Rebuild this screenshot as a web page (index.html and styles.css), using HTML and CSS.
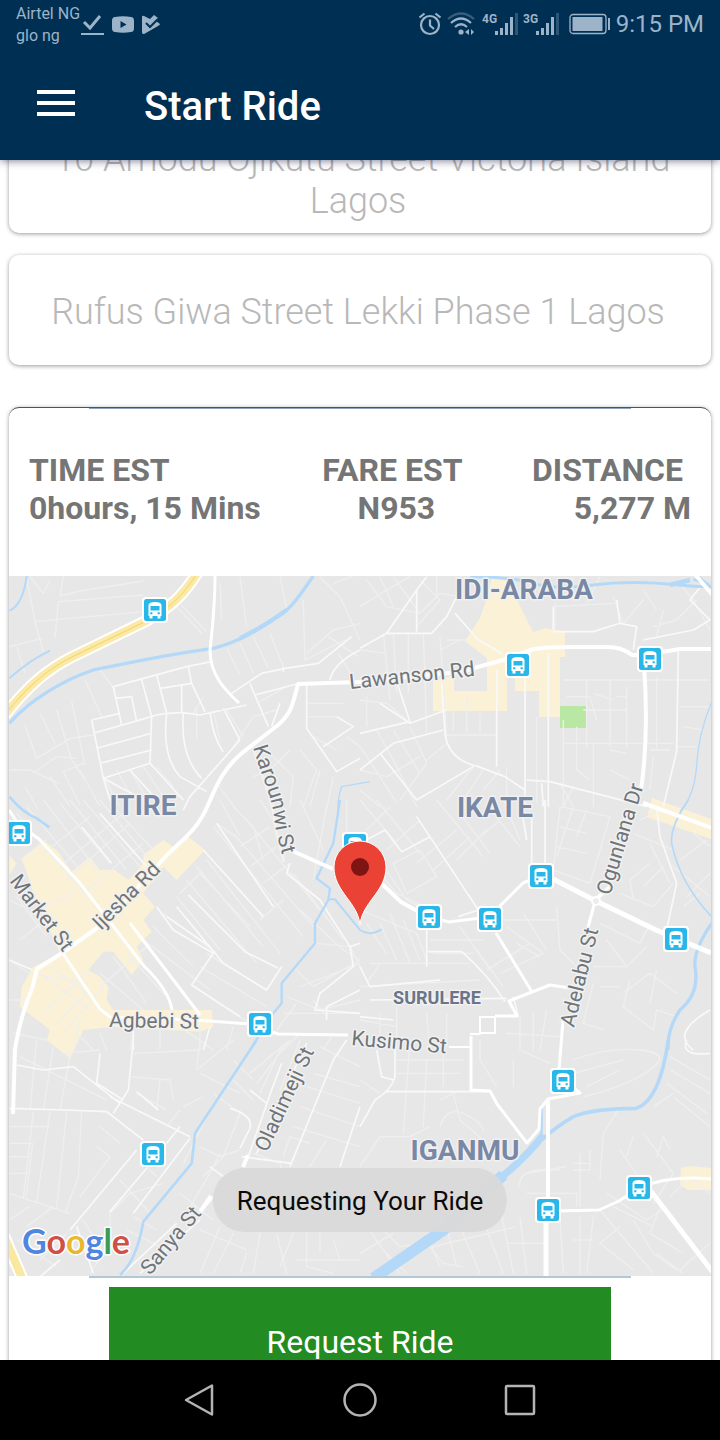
FILE: index.html
```html
<!DOCTYPE html>
<html lang="en">
<head>
<meta charset="utf-8">
<meta name="viewport" content="width=device-width, initial-scale=1">
<title>Start Ride</title>
<link rel="stylesheet" href="styles.css">
</head>
<body>
<header class="top">
  <div class="status">
    <div class="carriers"><span>Airtel NG</span><span>glo ng</span></div>
    <div class="notes">
      <svg class="ico" width="24" height="24" viewBox="0 0 24 24"><path d="M4 10l6 6L20 4" fill="none" stroke="currentColor" stroke-width="3"/><path d="M1 22h23" stroke="currentColor" stroke-width="2"/></svg>
      <svg class="ico" width="22" height="24" viewBox="0 0 22 24"><path fill="currentColor" fill-rule="evenodd" d="M3 5Q11 3.500 19 5Q22 5 22 9V16Q22 20 19 20Q11 21.500 3 20Q0 20 0 16V9Q0 5 3 5ZM8.500 9v7l6-3.500z"/></svg>
      <svg class="ico" width="18" height="24" viewBox="0 0 18 24"><path fill="currentColor" d="M0 5Q0 3 2 4L8 7 12 3 16 6 14 9 18 12Q18 13 16 14L3 21.500Q0 23 0 20Z"/><path d="M4 11l4 4 8-8" fill="none" stroke="#002f54" stroke-width="2"/></svg>
    </div>
    <div class="system">
      <svg class="ico" width="24" height="24" viewBox="0 0 24 24"><g fill="none" stroke="currentColor" stroke-width="2.200"><circle cx="12" cy="13" r="9"/><path d="M12 7.500v6l4 3.500M1.500 5.500l5-4M22.500 5.500l-5-4"/></g></svg>
      <svg class="ico wifi" width="28" height="24" viewBox="0 0 28 24"><g fill="none" stroke="currentColor" stroke-width="2.200"><path d="M1 7Q14-4 27 7" opacity=".35"/><path d="M4 11Q14 2 24 11M8 15Q14 9.500 20 15"/></g><circle cx="14" cy="20" r="2.600" fill="currentColor"/><path fill="currentColor" d="M18 20l4-3v6zM27 20l-3-3v6z"/></svg>
      <svg class="ico" width="36" height="24" viewBox="0 0 36 24"><text x="0" y="11" class="net">4G</text><g fill="currentColor"><path d="M13 19h3v4h-3zM18 16h3v7h-3zM23 11h3v12h-3zM28 5h3v18h-3z"/><path opacity=".3" d="M33 1h3v22h-3z"/></g></svg>
      <svg class="ico" width="36" height="24" viewBox="0 0 36 24"><text x="0" y="11" class="net">3G</text><g fill="currentColor"><path d="M13 19h3v4h-3zM18 16h3v7h-3zM23 11h3v12h-3zM28 5h3v18h-3z"/><path opacity=".3" d="M33 1h3v22h-3z"/></g></svg>
      <svg class="ico battery" width="42" height="24" viewBox="0 0 42 24"><rect x="1" y="2.500" width="36" height="19" rx="3" fill="none" stroke="currentColor" stroke-width="1.300"/><path fill="currentColor" d="M3.500 5h30v14h-30zM39 6h2v12h-2z"/></svg>
      <span class="clock">9:15 PM</span>
    </div>
  </div>
  <div class="appbar">
    <button class="menu" type="button" aria-label="Open menu"><span></span><span></span><span></span></button>
    <h1>Start Ride</h1>
  </div>
</header>

<main class="screen">
  <div class="scrolled">
    <p class="address">&nbsp;10 Amodu Ojikutu Street Victoria Island Lagos</p>
    <p class="address">Rufus Giwa Street Lekki Phase 1 Lagos</p>
    <section class="ride">
      <dl class="stats">
        <div><dt>TIME EST</dt><dd>0hours, 15 Mins</dd></div>
        <div class="mid"><dt>FARE EST&nbsp;</dt><dd>N953</dd></div>
        <div class="end"><dt>DISTANCE&nbsp;</dt><dd>5,277 M</dd></div>
      </dl>
      <div class="map">
        <svg class="canvas" viewBox="9 576 702 700" preserveAspectRatio="xMidYMid slice" role="img" aria-label="Map of Surulere">
          <defs>
            <g id="bus">
              <rect x="-13" y="-13" width="26" height="26" rx="4" fill="#fff"/>
              <rect x="-11" y="-11" width="22" height="22" rx="2.500" fill="#29b6e8"/>
              <path fill="#fff" fill-rule="evenodd" d="M-6.500-5Q-6-8 0-8Q6-8 6.500-5V6H5.500V8.500H2.500V6H-2.500V8.500H-5.500V6H-6.500ZM-4.500-4V.5H4.500V-4ZM-4.800 2.300v2h2.200v-2zM2.600 2.300v2h2.200v-2z"/>
            </g>
          </defs>
          <rect x="9" y="576" width="702" height="700" fill="#e7e7e7"/>

          <!-- built-up areas and park -->
          <g fill="#faf1d6">
            <path d="M487 598L492 576H505L533 632 545 628 565 632V657H560V717H539V691H515V672H507V711H433V680L454 676V691H487V658L465 641 480 618Z"/>
            <path d="M652 798l59 21v20l-64-22zM681 1168l8-2 22 2v22h-23l-8-5z"/>
            <path transform="translate(0 800) scale(.3333)" d="M65 180L130 120 175 155 215 215 270 170 300 210H345L385 240 430 190V165L490 120 520 140 565 110 615 150 530 240 490 200 430 280 465 320 430 360 455 395 410 440 430 480 395 525 340 455H310L265 510 300 530 325 560 320 600 340 630H635L640 680 600 695 340 680 250 690 210 775 140 720 150 690 60 620 65 560 100 500 180 460 130 350 100 280 80 215ZM28 165L50 190 28 225Z"/>
          </g>
          <path fill="#b9e8a4" d="M560 706h27v22h-27z"/>

          <!-- minor streets -->
          <g class="lane">
            <g transform="translate(0 570) scale(.3333)">
              <path d="M80 25L105 155 130 245M105 155L430 125M175 95L165 205M175 95L430 75M90 20l40 50 20-40M190 18l-10 60 60-15 190-30M28 230l100-25M50 230l25 80M75 465l35 100 100-60 70-10M120 430l45 90M170 420l45 150 40 60M215 395l40 190M255 330l50 110M300 300l45 60M28 600h60l90 40M100 610l70-50 60 5M190 605l60-25M190 605l50 100M240 600l60 110M150 620l60 90M75 650l40 70M530 110l75 80M545 105l75 80M660 40l5 110M720 20l20 150M840 18l20 100M910 90l5 180 120-60M680 235l40 80M720 220l40 90M760 200l45 95M810 190l40 100M920 250l80-70 80-20M960 20l60 60 60 130M1000 40l80-30M920 400h110M920 440h90M870 540l-60 60-50 20M900 540l50 60-40 110M940 500l70 40M820 560l60 60-10 90M1040 500l40 30M960 600l-30 110M1000 620l-20 100M830 420l-70 20-60 90M860 350l-90 50M1015 250l50 80M985 200l90 60"/>
              <path d="M590 420v90M640 420l20 90M680 420l50 80M610 380l-30 50M310 620l50 90M350 600l50 90M390 600l60 100M430 590l60 90M470 590l50 60M650 640l60 80"/>
            </g>
            <g transform="translate(360 570) scale(.3333)">
              <path d="M20 30l60 80 100 20M60 20l40 90M100 20l80 110 60-60 60 10M0 110l80-50 70-40M180 30l60 60-70 80M230 20v60M240 200l20 300M260 210h60M240 240l60-30M145 190v180M190 190l10 300M70 190l20 200M0 240l80 10M100 190l10 180M0 390l80 10 60 50M20 380v90M250 495h160M280 380l0 100M320 380v110M360 430v60M585 100v80M580 110l180-10M760 80l30 80 60-70M720 20l-40 80M640 20l-20 60M850 60l40 60M880 170l70-20 60-60M890 200l20-80M610 330h440M680 330v200M750 330v200M800 350v180M890 320v220M610 520h330M620 380h70l20 70M700 370l60 20M770 380h30M670 420h130M610 450v260M650 470v130l40 30M700 520v190M750 540l50 10M870 540h60M880 560l-10 100M750 600l60 30M0 600l80 20 100-60M50 480l60 110 60 120M0 530l60 90 50 80M100 480l80 130M150 470l50 110M0 660l60 50M200 580l-80 110M260 520l-60 50M340 590l-80 100M370 600l-60 90M420 600l-50 60M440 590v120M530 440v260M600 640l40 70M640 650l-30 60M1000 90l50 90M960 40l40 50M960 410h90M970 470l60 10M950 530h60"/>
            </g>
            <g transform="translate(0 800) scale(.3333)">
              <path d="M50 40L260 290M80 20l160 190M130 0l170 220M180 10l150 180M210 0l170 210M250 0l170 200M300 0l150 180M340 20l120 130M130 160l140-110M180 200l190-160M200 240l190-170M250 280l180-150M60 180l80-60M28 480l60 40 180 30M28 600h60M50 290l90 120M100 340l120-60M60 420l100-80M120 520l150 110M150 500l140 100M130 640l140-130M160 680l100-100M190 700l120-140M220 740l20-80M300 560l140-120M340 470l100 140M380 460l130 140M300 520l130 110M540 280l60-60 150 160M620 180l220 280M590 200l200 240M560 240l210 250M530 290l130 160M490 340l160 120M460 380l120 120M430 420l200 150M640 80l270 330M700 100l240 280M740 60l220 270M600 500l200 120M620 460l180 110M580 560l170 110M720 140l90-60M650 70l70 50M750 200l80-60M780 360l70-60M870 190l-80 60M880 220l150 200M900 330l130 120 50 30M950 430l100 10 30 60M880 500l60 60 140-80M900 560l180-70M860 590l100 40 120-30M850 640h230M830 690l60-80M940 600l40 50M700 20l60 60 30 100M660 0l60 110M780 0l40 60M980 20l-40 220M1040 0v100M900 0l70 150"/>
              <path d="M230 700l50 50M300 700l20 50M400 690l-10 60M480 690v60M540 680l100 70M600 680v70M700 680l-20 70M900 700l-50 50M1000 700l-30 50M28 300l40 20M60 60l20 60M40 700l100 20"/>
            </g>
            <g transform="translate(360 800) scale(.3333)">
              <path d="M0 0l110 130M50 0l130 160M90 20l-70 70M180 60l-100 90M290 90l-120 100M330 110l-110 100M380 90l-90 90M420 60l-60 50M230 0l140 170M300 40l90 120M400 40l80 100M430 0l50 120M100 190l80-40 50 80-90 50zM50 170l90 130 100 50M10 160l100 120 110 50M0 330l170 70 30 80M20 370l60 90M60 370l50 110M90 340l60 150M130 360l50 120M30 490h300M0 560l360-20M60 490l-40 60M210 420h160M220 460h120M350 450l80 110M300 380l90 130M380 510l130-80M420 520l130-60M470 430l70 40M440 380l110 80M490 340l70 110M430 360h160M590 320l10 130 60 60M600 20l-20 190 110 40 60-200zM640 20l-50 150M680 30l-30 80M600 80l80 20M590 140l90 20M780 280l100 40 60-70M820 300l-10-60 60-50M850 260l60-60M820 100l120 50M840 60l60-30M870 130l60 120M720 370l120 60 30-60M740 420l60 80M700 500h100l60-60M810 540l-20 80 90 70 10-60 60 20M790 580l80-60 80 60M890 510l-20 100M700 550l-30 120 60 20M720 560h60M480 650v100M520 640v110M560 630l-20 120M440 700l160 10M0 660l110 20M60 640v110M110 620v130M200 640l10 110M260 640v100M1000 100l50 40M960 180l80-60M940 200l110 90M980 290l70-70M970 320l50-40"/>
            </g>
            <g transform="translate(0 1040) scale(.3333)">
              <path d="M110 0l-20 210M160 20l-30 190M210 50l-30 160M300 30l-110 10M60 50l260 130M100 215l-30 260M150 215l-40 270M200 215l-30 290M245 210l-10 200-40 110M28 260h120M28 310h70l-20 160M28 350h60M28 400h60M28 460l180 60M290 320l40 30-90 120M300 260l60 50M28 540l60-40M80 560l80-60M120 660l80-80M50 600l120 80M250 540l60 100-40 60M330 510v100M330 520l60-60 100-30M380 570l120 60M400 530l70 40M400 40l200-10M390 110l120 10 10 60M480 120l-10 90M410 160l90 50M600 0l-10 90M600 100l120 60M640 160l80 60M700 120l60 60M720 220l-50 130-60 60M640 190l-90 180M700 60l60 60M750 100l120-100M780 160l70-150M600 320l60 30 60-20M540 460l100 80M570 500l60-100 30-60M600 570l140 60M660 560l-60 140M700 580l-60 120M740 640l-20 60M780 580l-20 120M830 580l30 120M880 580l-40 100M920 580v100l80 20M960 580v60M890 660h190M1000 600l20 60M760 340l80 30 30 120M850 350l20-60 60 20M880 260l200 60M900 200l180 60M920 140l160 50M940 100l140 40M960 20l120 60M980 300l-50 80M900 0l-60 150M870 0l-100 130M440 380l30 30M360 420l90 100M700 0l-110 90M550 200l60-30M500 260l40-50"/>
            </g>
            <g transform="translate(360 1040) scale(.3333)">
              <path d="M150 0l-20 280M200 60l-10 200M110 60h200M110 100h190M280 160l20 80 80 70M240 180l60-30M240 260q20-60 70-40t60 50M60 290h90l60-30M60 290l-60 90M0 120l60 40M250 30v110M360 0v60l50 80M460 60v80M480 30l90 40M640 60q100-40 200-30t30 60-200 80M640 100l150-40M680 140l100-50M930 50l120 70M930 90l120 70M920 130l120 90M940 170l110 90M880 200l60-40M780 200l-50 80-10 140M850 280l90 120-60 90M890 350l20-60 20 40M780 330l90 130M820 290l-20 60M740 460l120 80 60-40M720 510l160 190M760 500l120 60M780 560l-60 50 100 80M820 540l60 100 70 50M900 500l-30 80 100 60M930 470l60-60 60 50M660 340v160M690 330v60h-50M640 370h50M500 400l120-20M480 440q-10-60 120-50M500 460h150v40M600 530l10 170M660 530v170M700 530l-20 170M640 600h60M20 560l100 140M60 560l60 60 80-10 50 60 60 10M200 580l40 100M260 560l30 120M300 560l60 140M370 540l60 160M420 500l40 200M480 530l20 170M0 640l100-60M80 640l60 60M220 620l250-60M440 610h110M960 690l90-80M970 700l-80-60"/>
            </g>
          </g>

          <!-- secondary streets -->
          <g class="street">
            <g transform="translate(0 570) scale(.3333)">
              <path d="M635 275L560 290 340 350 365 465M455 440L470 435 500 430 550 428 600 435 740 405M425 330l30 110M470 315l30 115M480 355l95-15 40 85M565 290l10 50M545 345v80M345 385l50-5 15 75M275 450l85-20M275 450L310 625 450 580 455 440 280 490M290 535l165-45M300 580l155-40M310 625l25 80M500 430Q485 560 540 620L620 665M550 430Q540 560 605 625M630 425q10 80 40 120M670 415l50 95M310 625l150 80M390 600l90 100M450 580l100 110M765 375L890 342M695 370l90-60 70-15 100-15 100-80M850 290v15M750 340l55 130M920 345v130l90 130 70-40M970 530l90-60-50-30M990 330q10-50 90-90M840 400l-25 70M720 510L570 680l-20 40"/>
            </g>
            <g transform="translate(360 570) scale(.3333)">
              <path d="M0 235L80 190H215L260 140 290 80M80 190L170 60 200 20M170 60V185M285 130l70 80 70 40M0 490l150-35M60 400l90 60 110-40M150 455l-50-150M0 600l100-80 150-40M245 340l10 150q10 80 100 100l80 30 60 40M410 300v290M340 590L170 690 60 550M495 320v390M565 250v460M500 630l70 5 290 75M545 640l5 70M580 185h120L780 160l50 10-10 70M770 90l10 70M850 210l150-30 50-30-60-60 40-50M955 245l-5 300-40 165M580 110v70"/>
            </g>
            <g transform="translate(0 800) scale(.3333)">
              <path d="M470 320l50 70 120 70-65 95 145 95M530 320l140 170 130 80 45-70M565 285l170 170 100 50M650 70L820 320M610 150l180 200M500 350l130 90M870 190l-10 30 100 80 90 140 30-10M1050 440l10 60-100 80-15 50 135 10M980 660v-40l100-50M245 80l90 110M300 40l140 160M28 480l70 30M630 680l-20 70M400 690v60"/>
            </g>
            <g transform="translate(360 800) scale(.3333)">
              <path d="M0 130l75-40 50 65 85-45M170 50L355 330M355 330l-60 20M200 390v110M205 455h100q80 70 130 150M0 500l30 60 210-20M30 600l410-5M515 50v170M555 0v190M480 0l20 120M890 20l10 90 50 140-30 140M460 590l15 60M1050 630q-120 70-50 120M0 650l100 10"/>
            </g>
            <g transform="translate(0 1040) scale(.3333)">
              <path d="M28 205L200 210 320 215 430 300M50 75l80 15 90-10 140 110M400 0L385 150 340 220M330 170l200 100 40 20M300 40l-10 90 80 50M410 155l65 55M540 260l-40 50M410 330L210 570M440 385l-110 130M570 295L400 520M530 550L370 700M630 380l40 30M745 350l70-200 30-80M600 520l50-60M725 350l150 20M750 150l50 40M690 205q70 20 60 60l-30 60M920 10l-90 190-60 140M870 380L1000 60l40-60M1080 200L1020 380M230 560l50 140M180 660l-60 50M600 540l-180 160"/>
            </g>
            <g transform="translate(360 1040) scale(.3333)">
              <path d="M105 10v100q-10 40-60 70L0 260M50 30l15 80 35 10M75 155h320M980 0q-20 50 70 40"/>
            </g>
          </g>

          <!-- water -->
          <g class="water">
            <g transform="translate(0 570) scale(.3333)"><path d="M28 460C90 390 190 330 280 300 400 275 520 250 640 235 740 210 800 160 860 120 890 95 910 60 940 18" stroke-width="10"/><path d="M720 205Q800 165 860 120" stroke-width="13"/><path d="M80 18C75 60 60 110 28 122M28 325Q90 270 150 242" stroke-width="6"/><path d="M1110 635l-85 15q-15 40-10 90" stroke-width="4"/></g>
            <g transform="translate(360 570) scale(.3333)"><path d="M330 20Q450 20 520 40T700 45 960 45 1000 28" stroke-width="9"/><path d="M930 45l60-15" stroke-width="14"/><path d="M1005 12l48 40" stroke-width="9"/><path d="M1055 395q-40 100-45 190t-50 140" stroke-width="4"/></g>
            <g transform="translate(0 800) scale(.3333)"><path d="M28-10Q70 40 110 55L148 82" stroke-width="8"/><path d="M1020 0L1000 130 950 235 990 265 985 300 945 370V430L845 550V610L820 640 750 750" stroke-width="7"/><path d="M985 298H1005L1080 390Q1110 410 1145 388" stroke-width="6"/></g>
            <g transform="translate(360 800) scale(.3333)"><path d="M985 0Q930 80 935 130 960 250 1055 350" stroke-width="5"/><path d="M1055 370Q1000 450 1005 500 1020 580 960 630 920 690 925 750" stroke-width="10"/></g>
            <g transform="translate(0 1040) scale(.3333)"><path d="M770 0L585 280Q580 330 575 370L430 545Q410 660 360 705" stroke-width="8"/></g>
            <g transform="translate(360 1040) scale(.3333)"><path d="M925 0Q900 180 830 205 700 205 640 230 590 260 550 295" stroke-width="11"/><path d="M550 285Q500 350 420 415" stroke-width="22"/><path d="M430 405L250 570 40 715" stroke-width="34"/><path d="M545 200v90" stroke-width="7"/></g>
          </g>

          <!-- highway and main roads -->
          <g fill="none">
            <path d="M4 716C30 683 50 668 72 657 103 642 128 630 146 621 172 607 186 592 199 570" stroke="#fff" stroke-width="12"/>
            <path d="M4 716C30 683 50 668 72 657 103 642 128 630 146 621 172 607 186 592 199 570" stroke="#fbe9a6" stroke-width="8"/>
            <path d="M4 716C30 683 50 668 72 657 103 642 128 630 146 621 172 607 186 592 199 570" stroke="#f2d36f" stroke-width="1"/>
            <path d="M4 1236L23 1280" stroke="#fff" stroke-width="12"/><path d="M4 1236L23 1280" stroke="#fae7a0" stroke-width="8"/>
          </g>
          <g class="road">
            <path d="M215 576q0 30-5 74c0 25 15 40 29 53" stroke-width="3"/>
            <path d="M460 672l43-12 28-10c10-3 24-3 41-3h35q15 0 25 8h12l36-6h31M460 672l-100 10-62 2c-5 19-6 29-20 41l-36 28c-20 17-26 34-34 52-10 23-20 30-41 50l-60 66-45 32-25 16-5 20c-12 27-15 50-17 60l-2 65" stroke-width="4"/>
            <path d="M644 665q5 70-3 125M596 899l14-12" stroke-width="4"/>
            <path d="M594 905l-8 30M563 1020l-4 50M563 1080l17 13-32 6-8 10-1 20-12 14-30-39-7-13-19-1v-54" stroke-width="3"/>
            <path d="M470 1034h10v-17h15v16h-15M471 1047h-22" stroke-width="2"/>
            <path d="M288 849l45 20M381 883l20 19 18 10" stroke-width="4"/>
            <path d="M429 917l20 5 40-5 34-34 18-7" stroke-width="3"/>
            <path d="M549 877l47 24 60 29 55 23" stroke-width="5"/>
            <path d="M496 933l36 59 18-7 20 3M532 992l-23 9 8 15h-22" stroke-width="3"/>
            <path d="M9 810l10 15 20 14 40 43 65 84q25 24 28 44M62 952l38 57 10 8 85 3 55 4 28 10 70 1M130 923l70 92" stroke-width="3"/>
            <path d="M548 1100v110" stroke-width="4"/><path d="M546 1215v65" stroke-width="5"/>
            <path d="M555 1211l44-1 20-9 20-13q30-13 72-9" stroke-width="3"/><path d="M693 572l22 26M643 803l72 26" stroke-width="4"/>
            <path d="M650 1190l65 85" stroke-width="5"/>
            <path d="M200 1212l11-16M248 1155l-5 12" stroke-width="4"/>
          </g>
          <circle cx="596" cy="901" r="4" fill="#eee" stroke="#fff" stroke-width="2"/>

          <!-- transit stops -->
          <g>
            <use href="#bus" x="155" y="610"/><use href="#bus" x="518" y="665"/><use href="#bus" x="650" y="659"/>
            <use href="#bus" x="19" y="833"/><use href="#bus" x="355" y="845"/><use href="#bus" x="541" y="876"/>
            <use href="#bus" x="429" y="917"/><use href="#bus" x="490" y="919"/><use href="#bus" x="676" y="939"/>
            <use href="#bus" x="260" y="1024"/><use href="#bus" x="563" y="1081"/><use href="#bus" x="153" y="1154"/>
            <use href="#bus" x="639" y="1188"/><use href="#bus" x="548" y="1210"/>
          </g>

          <g class="label">
            <path id="karounwi" fill="none" d="M253 747C261 775 271 795 274 815 275 832 280 845 284 862"/>
            <text><textPath href="#karounwi">Karounwi St</textPath></text>
            <text transform="translate(350 689) rotate(-6)">Lawanson Rd</text>
            <text transform="translate(101 931) rotate(-45)">Ijesha Rd</text>
            <text transform="translate(9 881) rotate(53)">Market St</text>
            <text transform="translate(109 1027) rotate(1)">Agbebi St</text>
            <text transform="translate(351 1045) rotate(5)">Kusimo St</text>
            <text transform="translate(574 1028) rotate(-76)">Adelabu St</text>
            <text transform="translate(610 896) rotate(-73)">Ogunlana Dr</text>
            <text transform="translate(267 1153) rotate(-65)">Oladimeji St</text>
            <text transform="translate(150 1276) rotate(-50)">Sanya St</text>
          </g>
          <g class="district">
            <text x="524" y="599">IDI-ARABA</text><text x="143" y="815">ITIRE</text>
            <text x="495" y="817">IKATE</text><text x="465" y="1160">IGANMU</text>
            <text x="437" y="1004" class="town">SURULERE</text>
          </g>

          <path d="M360 925C358 902 334 892 334 867a26 26 0 0 1 52 0C386 892 362 902 360 925Z" fill="#ea4335" stroke="#fff" stroke-width="1"/>
          <circle cx="360" cy="867" r="9" fill="#7d1512"/>
          <text class="google" x="22" y="1254"><tspan fill="#4f86e0">G</tspan><tspan fill="#cf5145">o</tspan><tspan fill="#e8b92e">o</tspan><tspan fill="#4f86e0">g</tspan><tspan fill="#3f9b54">l</tspan><tspan fill="#cf5145">e</tspan></text>
        </svg>
        <div class="toast" role="status">Requesting Your Ride</div>
      </div>
      <div class="rule"></div>
      <button class="request" type="button">Request Ride</button>
    </section>
  </div>
</main>

<nav class="keys">
  <button type="button" aria-label="Back"><svg width="36" height="36" viewBox="0 0 36 36"><path d="M30 3.500V32.500L4 18Z"/></svg></button>
  <button type="button" aria-label="Home"><svg width="36" height="36" viewBox="0 0 36 36"><circle cx="18" cy="18" r="15.500"/></svg></button>
  <button type="button" aria-label="Recent apps"><svg width="36" height="36" viewBox="0 0 36 36"><rect x="4" y="4" width="28" height="28" rx="1"/></svg></button>
</nav>
</body>
</html>
```
FILE: styles.css
```css
* { box-sizing: border-box; }

body {
  margin: 0;
  height: 100vh;
  display: flex;
  flex-direction: column;
  background: #fff;
  font-family: Roboto, "Liberation Sans", sans-serif;
}

button {
  border: 0;
  padding: 0;
  background: none;
  font: inherit;
}

p, h1, dl, dd { margin: 0; }

.top {
  position: relative;
  z-index: 1;
  flex: none;
  background: #002f54;
  box-shadow: 0 1px 8px rgba(0, 0, 50, .5);
}

.status {
  display: flex;
  height: 48px;
  padding: 0 16px;
  color: #9db4c8;
}

.carriers {
  display: flex;
  flex-direction: column;
  padding-top: 3px;
  font-size: 16px;
  line-height: 22px;
}

.notes {
  display: flex;
  gap: 8px;
  padding-top: 12px;
}

.system {
  display: flex;
  align-items: center;
  gap: 5px;
  margin-left: auto;
}

.ico { display: block; }
.wifi { margin-right: 2px; }
.battery { margin-left: 5px; }

.net {
  fill: currentColor;
  font-size: 12px;
  font-weight: 700;
}

.clock {
  font-size: 24px;
  line-height: 48px;
}

.appbar {
  display: flex;
  align-items: center;
  height: 112px;
  padding-left: 37px;
  gap: 69px;
}

.menu {
  display: flex;
  flex-direction: column;
  gap: 7px;
  width: 38px;
  padding-bottom: 2px;
}

.menu span {
  height: 4px;
  background: #fff;
}

.appbar h1 {
  padding-top: 6px;
  color: #fff;
  font-size: 40px;
  font-weight: 500;
  line-height: 48px;
}

.screen {
  flex: 1;
  min-height: 0;
  overflow: hidden;
}

.scrolled {
  display: flex;
  flex-direction: column;
  gap: 22px;
  margin-top: -37px;
  padding: 0 9px;
}

.address,
.ride {
  border-radius: 10px;
  background: #fff;
  box-shadow: 0 1px 4px rgba(0, 0, 0, .4);
}

.address {
  display: flex;
  align-items: center;
  justify-content: center;
  height: 110px;
  padding: 4px 34px 0 30px;
  color: #b8b8b8;
  font-size: 36px;
  font-weight: 300;
  line-height: 42px;
  text-align: center;
}

.ride {
  margin-top: 20px;
  padding-bottom: 20px;
  border-top: 1px solid #4d5263;
}

.ride::before {
  content: "";
  display: block;
  height: 1px;
  margin: 0 80px;
  background: #8fa3bb;
}

.stats {
  display: flex;
  justify-content: space-between;
  padding: 42px 20px 49px;
  color: #757575;
  font-size: 32px;
  font-weight: 700;
  line-height: 38px;
}

.mid { text-align: center; }
.end { text-align: right; }

.map {
  position: relative;
  height: 700px;
}

.canvas {
  display: block;
  width: 100%;
  height: 100%;
}

.lane, .street, .water, .road {
  fill: none;
  stroke-linejoin: round;
}

.lane { stroke: #efefef; stroke-width: 4; }
.street { stroke: #f9f9f9; stroke-width: 5; }
.water { stroke: #b4d9f8; }
.road { stroke: #fff; }

.label, .district, .google {
  paint-order: stroke;
  stroke: #f1f1f1;
  stroke-width: 3px;
  stroke-linejoin: round;
}

.label {
  fill: #70757a;
  font-size: 21px;
}

.district {
  fill: #7988a5;
  font-size: 28px;
  font-weight: 700;
  text-anchor: middle;
}

.town {
  fill: #6b7589;
  font-size: 18px;
}

.google {
  stroke: #fff;
  font-family: Lato, Roboto, sans-serif;
  font-size: 34px;
  font-weight: 700;
}

.toast {
  position: absolute;
  bottom: 44px;
  left: 50%;
  padding: 17px 24px 15px;
  border-radius: 32px;
  background: rgba(217, 217, 217, .97);
  color: #0a0a0a;
  font-size: 26px;
  line-height: 32px;
  white-space: nowrap;
  transform: translateX(-50%);
}

.rule {
  height: 2px;
  margin: 0 80px 9px;
  background: #b0c8d8;
}

.request {
  display: block;
  width: calc(100% - 200px);
  height: 110px;
  margin: 0 auto;
  background: #228b22;
  color: #fff;
  font-size: 32px;
}

.keys {
  position: relative;
  z-index: 1;
  display: flex;
  flex: none;
  align-items: center;
  justify-content: center;
  gap: 124px;
  height: 80px;
  background: #000;
}

.keys svg {
  display: block;
  fill: none;
  stroke: #b4b4b4;
  stroke-width: 2.5;
  stroke-linejoin: round;
}
```
